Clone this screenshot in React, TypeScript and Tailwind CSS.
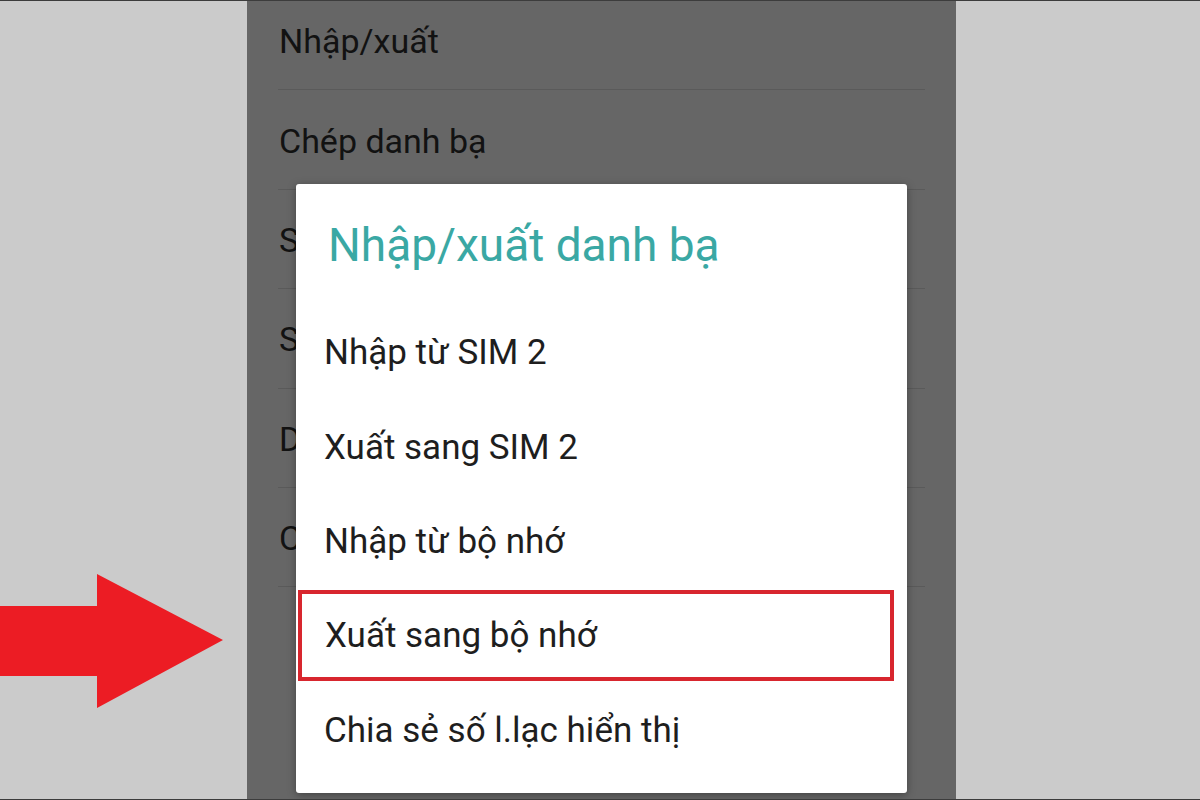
import React from "react";

const bgRows = [
  "Nhập/xuất",
  "Chép danh bạ",
  "Sắp xếp danh bạ",
  "Số liên lạc để hiển thị",
  "Danh bạ hiển thị",
  "Chặn số",
];

const items = [
  "Nhập từ SIM 2",
  "Xuất sang SIM 2",
  "Nhập từ bộ nhớ",
  "Xuất sang bộ nhớ",
  "Chia sẻ số l.lạc hiển thị",
];

export default function App() {
  return (
    <div
      className="relative w-[1200px] h-[800px] overflow-hidden flex bg-[#cbcbcb] border-y border-[#3c3c3c]"
      style={{ fontFamily: "Roboto, 'Noto Sans', sans-serif" }}
    >
      <div className="w-[247px] shrink-0" />
      <div className="w-[709px] shrink-0 bg-[#666666] px-[31px] overflow-hidden">
        <div className="-mt-[10px] flex flex-col">
          {bgRows.map((t) => (
            <div
              key={t}
              className="h-[99.4px] flex items-center pt-[3px] text-[34px] text-[#121212] border-b border-[#5a5a5a]"
            >
              <span className="pl-[1px] whitespace-nowrap">{t}</span>
            </div>
          ))}
        </div>
      </div>
      <div className="flex-1" />

      {/* annotation arrow */}
      <svg
        className="absolute left-0 top-[573px]"
        width="226"
        height="136"
        viewBox="0 0 226 136"
      >
        <polygon
          points="0,32 97,32 97,0 223,66 97,134 97,102 0,102"
          fill="#ec1c24"
        />
      </svg>

      {/* dialog */}
      <div className="absolute left-[296px] top-[183px] w-[611px] h-[609px] bg-white rounded-[3px] shadow-[0_2px_8px_rgba(0,0,0,0.35)] flex flex-col">
        <div className="h-[122px] pt-[34px] pl-[32px] text-[46px] leading-[54px] text-[#3aa8a4] whitespace-nowrap">
          Nhập/xuất danh bạ
        </div>
        {items.map((t, i) =>
          i === 3 ? (
            <div key={t} className="h-[94.5px] pl-[2px] pr-[13px]">
              <div className="h-[91px] border-4 border-[#d8262e] flex items-center pt-[2px] pl-[23px] text-[35px] text-[#1e1e1e] whitespace-nowrap">
                {t}
              </div>
            </div>
          ) : (
            <div
              key={t}
              className="h-[94.5px] flex items-center pl-[28px] text-[35px] text-[#1e1e1e] whitespace-nowrap"
            >
              {t}
            </div>
          )
        )}
      </div>
    </div>
  );
}
